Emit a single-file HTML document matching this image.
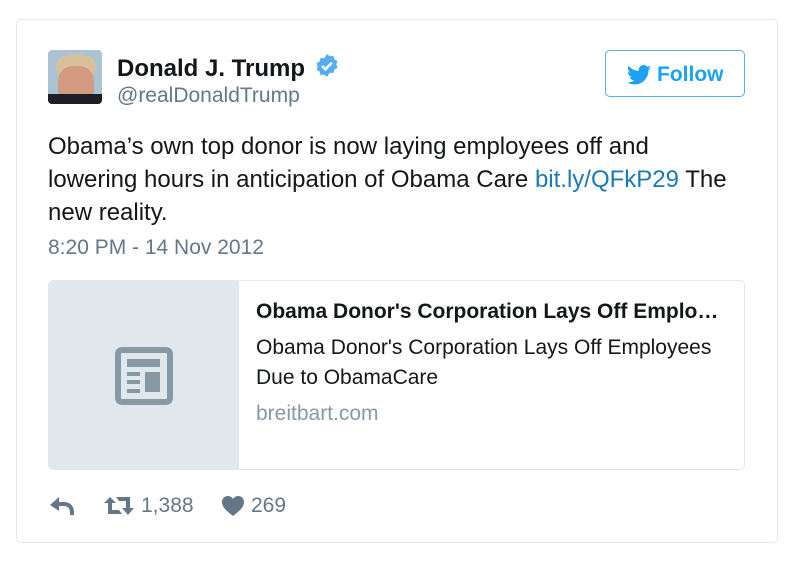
<!DOCTYPE html>
<html><head><meta charset="utf-8"><style>
body{margin:0;width:799px;height:567px;background:#fff;font-family:"Liberation Sans",sans-serif;position:relative;overflow:hidden}
.a{position:absolute}
</style></head><body>
<div class="a" style="left:16px;top:19px;width:760px;height:522px;border:1px solid #e1e8ed;border-radius:5px"></div>
<div class="a" style="left:48px;top:50px;width:54px;height:54px;border-radius:4px;overflow:hidden;background:#a9c3d3">
<div class="a" style="left:8px;top:4px;width:40px;height:22px;border-radius:50% 50% 30% 30%;background:#d8c09c"></div>
<div class="a" style="left:10px;top:16px;width:36px;height:38px;border-radius:40%;background:#d49a80"></div>
<div class="a" style="left:0;top:44px;width:54px;height:12px;background:#1e1e26"></div>
</div>
<div class="a" style="left:117px;top:53px;font-size:24px;font-weight:bold;color:#14171a;white-space:nowrap">Donald J. Trump <svg style="vertical-align:-3px;margin-left:2px" width="26" height="26" viewBox="0 0 24 24"><path fill="#55acee" d="M12 1l2.6 2 3.3-.3.9 3.2 2.9 1.6-1.1 3.1 1.1 3.1-2.9 1.6-.9 3.2-3.3-.3L12 22l-2.6-2-3.3.3-.9-3.2-2.9-1.6 1.1-3.1-1.1-3.1 2.9-1.6.9-3.2 3.3.3z"/><path d="M7.5 12l3 3 6-6" stroke="#fff" stroke-width="2.4" fill="none"/></svg></div>
<div class="a" style="left:117px;top:84px;font-size:21px;color:#657786">@realDonaldTrump</div>
<div class="a" style="left:605px;top:50px;width:140px;height:47px;border:1px solid #55acee;border-radius:5px;box-sizing:border-box"></div>
<svg class="a" style="left:626px;top:65px" width="26" height="20" viewBox="0 0 24 20"><path fill="#1da1f2" d="M24 2.4c-.9.4-1.8.6-2.8.8 1-.6 1.8-1.6 2.2-2.7-1 .6-2 1-3.1 1.2C19.3.6 18 0 16.6 0c-2.7 0-4.9 2.2-4.9 4.9 0 .4 0 .8.1 1.1C7.7 5.8 4.1 3.9 1.7.9c-.4.7-.7 1.6-.7 2.5 0 1.7.9 3.2 2.2 4.1-.8 0-1.6-.2-2.2-.6v.1c0 2.4 1.7 4.4 3.9 4.8-.4.1-.8.2-1.3.2-.3 0-.6 0-.9-.1.6 2 2.4 3.4 4.6 3.4-1.7 1.3-3.8 2.1-6.1 2.1-.4 0-.8 0-1.2-.1 2.2 1.4 4.8 2.2 7.5 2.2 9.1 0 14-7.5 14-14v-.6c1-.7 1.8-1.6 2.5-2.5z"/></svg>
<div class="a" style="left:657px;top:63px;font-size:21px;font-weight:bold;color:#1da1f2">Follow</div>
<div class="a" style="left:48px;top:130px;width:680px;font-size:24px;line-height:33px;color:#14171a">Obama’s own top donor is now laying employees off and lowering hours in anticipation of Obama Care <span style="color:#1b7ab5">bit.ly/QFkP29</span> The new reality.</div>
<div class="a" style="left:48px;top:236px;font-size:21px;color:#657786">8:20 PM - 14 Nov 2012</div>
<div class="a" style="left:48px;top:280px;width:697px;height:190px;border:1px solid #e1e8ed;border-radius:5px;box-sizing:border-box;overflow:hidden"><div style="width:190px;height:100%;background:#e1e8ed"></div></div>
<svg class="a" style="left:115px;top:347px" width="58" height="58"><rect x="3" y="3" width="52" height="52" rx="4" fill="none" stroke="#8899a6" stroke-width="6"/><rect x="12" y="12" width="33" height="8" fill="#8899a6"/><rect x="12" y="25" width="13" height="4" fill="#8899a6"/><rect x="12" y="33" width="13" height="4" fill="#8899a6"/><rect x="12" y="42" width="13" height="4" fill="#8899a6"/><rect x="30" y="25" width="15" height="20" fill="#8899a6"/></svg>
<div class="a" style="left:256px;top:300px;font-size:21px;font-weight:bold;color:#14171a;white-space:nowrap">Obama Donor's Corporation Lays Off Emplo…</div>
<div class="a" style="left:256px;top:333px;width:475px;font-size:21px;line-height:30px;color:#14171a">Obama Donor's Corporation Lays Off Employees Due to ObamaCare</div>
<div class="a" style="left:256px;top:402px;font-size:21px;color:#8899a6">breitbart.com</div>
<svg class="a" style="left:50px;top:497px" width="25" height="20" viewBox="0 0 25 20"><path fill="#657786" d="M0 8L9 0v5h5c6 0 10 4 10 10v3h-4v-3c0-3-2-6-6-6H9v5z"/></svg>
<svg class="a" style="left:104px;top:497px" width="30" height="20" viewBox="0 0 30 20"><path fill="#657786" d="M6 0l6 6H8v7h7l3 4H4V6H0zM12 0h14v11h4l-6 7-6-7h4V4h-7z"/></svg>
<div class="a" style="left:141px;top:494px;font-size:21px;color:#657786">1,388</div>
<svg class="a" style="left:222px;top:496px" width="22" height="20" viewBox="0 0 22 20"><path fill="#657786" d="M11 20C6 16 0 12 0 6 0 2.5 2.5 0 5.8 0 8 0 10 1.3 11 3 12 1.3 14 0 16.2 0 19.5 0 22 2.5 22 6c0 6-6 10-11 14z"/></svg>
<div class="a" style="left:251px;top:494px;font-size:21px;color:#657786">269</div>
</body></html>
